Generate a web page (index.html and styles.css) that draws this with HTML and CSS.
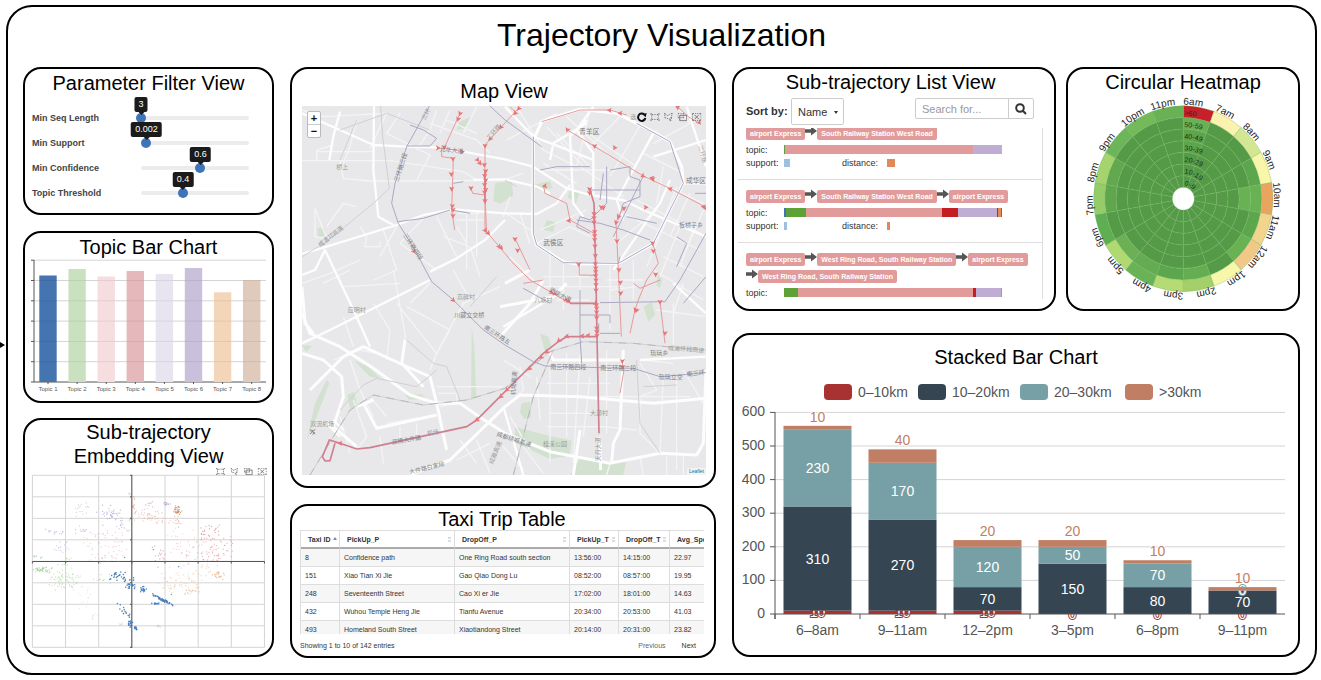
FILE: index.html
```html
<!DOCTYPE html>
<html lang="en">
<head>
<meta charset="utf-8">
<title>Trajectory Visualization</title>
<link rel="stylesheet" href="styles.css">
</head>
<body>
<svg class="defs" aria-hidden="true">
  <symbol id="i-rect" viewBox="-2 -3 94 76"><path d="M0.4,10V-0.2h9.8 M89.6,10V-0.2h-9.8 M0.4,60v10.2h9.8 M89.6,60v10.2h-9.8 M12.3,22.4V10.5h13.1 M33.6,10.5h7.8 M49.1,10.5h7.8 M77.5,22.4V10.5h-13 M12.3,31.1v8.2 M77.7,31.1v8.2 M12.3,47.6v11.9h13.1 M33.6,59.5h7.6 M49.1,59.5h7.7 M77.5,47.6v11.9h-13"/></symbol>
  <symbol id="i-poly" viewBox="5 2 62 58"><path d="M55.2,34.9c1.7,0,3.1,1.4,3.1,3.1s-1.4,3.1-3.1,3.1s-3.1-1.4-3.1-3.1S53.5,34.9,55.2,34.9z M50.4,51c1.7,0,3.1,1.4,3.1,3.1c0,1.7-1.4,3.1-3.1,3.1c-1.7,0-3.1-1.4-3.1-3.1C47.3,52.4,48.7,51,50.4,51z M55.6,37.1l1.5-7.8 M60.1,13.5l1.6-8.7l-7.8,4 M59,19l-1,5.3 M24,16.1l6.4,4.9l6.4-3.3 M48.5,11.6l-5.9,3.1 M19.1,12.8L9.7,5.1l1.1,7.7 M13.4,29.8l1,7.3l6.6,1.6 M11.6,18.4l1,6.1 M27.3,40.2l6.1,1.6 M49.9,52.1l-5.6-7.6l-4.9-1.2"/></symbol>
  <symbol id="i-keep" viewBox="2 -2 84 72"><path d="M4,10.5V1h10.3 M20.7,1h6.1 M33,1h6.1 M55.4,10.5V1H45.2 M4,17.3v6.6 M55.6,17.3v6.6 M4,30.5V40h10.3 M20.7,40h6.1 M33,40h6.1 M55.4,30.5V40H45.2 M21,18.9h62.9v48.6H21V18.9z"/></symbol>
  <symbol id="i-clear" viewBox="2 2 71 56"><path d="M22,14.7l30.9,31 M52.9,14.7L22,45.7 M4.7,16.8V4.2h13.1 M26,4.2h7.8 M41.6,4.2h7.8 M70.3,16.8V4.2H57.2 M4.7,25.9v8.6 M70.3,25.9v8.6 M4.7,43.2v12.6h13.1 M26,55.8h7.8 M41.6,55.8h7.8 M70.3,43.2v12.6H57.2"/></symbol>
  <symbol id="i-arrow" viewBox="0 0 12 10"><path d="M0 3.2h6V0.4L12 5L6 9.6V6.8H0z"/></symbol>
</svg>
<svg class="inflow" viewBox="0 0 5 6" aria-hidden="true"><path d="M0 0L5 3L0 6z"/></svg>
<main class="frame">
  <h1>Trajectory Visualization</h1>
  <div class="columns">

    <div class="column">
      <section class="panel params">
        <h2>Parameter Filter View</h2>
        <div class="param"><label for="p1">Min Seq Length</label><div class="slider" style="--v:0"><input id="p1" type="range" min="0" max="100" value="0"><output for="p1">3</output></div></div>
        <div class="param"><label for="p2">Min Support</label><div class="slider" style="--v:.05"><input id="p2" type="range" min="0" max="100" value="5"><output for="p2">0.002</output></div></div>
        <div class="param"><label for="p3">Min Confidence</label><div class="slider" style="--v:.55"><input id="p3" type="range" min="0" max="100" value="55"><output for="p3">0.6</output></div></div>
        <div class="param"><label for="p4">Topic Threshold</label><div class="slider" style="--v:.39"><input id="p4" type="range" min="0" max="100" value="39"><output for="p4">0.4</output></div></div>
      </section>
      <section class="panel topics">
        <h2>Topic Bar Chart</h2>
        <svg id="topics" viewBox="25 260 247 139" role="img" aria-label="Topic bar chart"></svg>
      </section>
      <section class="panel embedding">
        <h2>Sub-trajectory<br>Embedding View</h2>
        <svg id="embedding" viewBox="25 469 247 187" role="img" aria-label="Embedding scatter plot"></svg>
      </section>
    </div>

    <div class="column">
      <section class="panel map-panel">
        <h2>Map View</h2>
        <div class="map">
          <svg id="map" viewBox="36 108 1212 1107" role="img" aria-label="Trajectory map">
            <g class="park">
              <path d="M508 155l35-15-15 35-28 5zM82 475h22v22l-20 8zM615 340l50-8 5 45-40 25-20-10zM730 345l50-12 8 22-45 5zM840 355l28 15-10 30-25-18zM770 450l25 5-5 30-30-5zM190 870l45 20 35 35-30-5zM110 930l8 10-38 100-30 70 25-110zM172 975l20-10 10 45-22 5zM345 975l50-2 12 14-50 2zM545 770l8 60 6 150-16 10zM750 790l25 10 10 30-20 15zM695 1000l25-5 4 45-20 8-14-20zM675 1070l80 22 90 20-6 45-60 10-105-50zM870 1165l90 10 50-5-10 45h-160zM1060 710l25-15 10 40-20 20zM1105 610l12 20-8 25-10-10zM36 825l30 3-18 18z"/>
            </g>
            <g class="minor">
              <path d="M36 272H300L520 305L560 330M80 245H250M80 270V240L130 225M150 275L160 325L240 333H490L645 328L700 310M200 150L180 230L160 280M290 130L240 235M330 130L290 190L420 255L380 330M440 120L420 180L380 240M36 120L100 140L290 130M470 150L560 190M420 160L560 210L600 250M480 120L450 190M560 110L520 190M75 415L110 505L75 500L75 415M110 470L160 400L200 410M210 470L230 500L225 530H270V515M320 470L270 560M400 445L330 520L440 600M280 480L320 600L250 630M440 440L500 560M460 500L540 530L570 620M500 470L530 520M530 430V600M560 420V560M500 430H570M500 450H580M490 600L540 690M36 640L120 610L210 570M100 640L180 600M160 650L330 640M310 600L345 790L345 810M360 700L420 640M320 700L440 850L520 700L630 650M350 710L480 780L440 850L420 900M160 740L190 830M250 700L300 780L290 870M180 870L210 960L250 1040M130 870L210 840L260 850M190 990L230 1100L200 1140M150 1040L180 1150M240 980L290 1040M330 1070V1120M380 1060V1110M290 1060L410 1040M270 1100L280 1180M440 950H640M445 970H500V1000L450 1010M510 1110L560 1180M560 1110L600 1210M500 1170L600 1120"/>
              <path d="M680 110L760 240L860 290M650 210L800 130M770 170L880 290M800 190L900 290M830 140L960 260M900 120L860 290M1000 130L900 230M1060 150L960 320M1100 180L1010 330M870 290L1000 380M880 180L1040 290M760 280L860 340M760 300L980 300M1060 250L1180 310M1090 220L1200 160L1170 120M1120 290L1100 400M1160 350L1120 450M1200 370L1140 500M1240 420L1180 560M1070 320L1240 400M1000 430L1230 540M1040 390L1250 500M980 520L1100 420M1130 450L1070 590M1170 470L1110 620M1210 480L1170 590M1090 600L1240 690M1120 560L1240 620M740 520L840 470L900 500M750 480L890 420M780 540V650M820 580V720M870 580V700M760 620H900M760 650H1000M800 690H900M660 560L740 640M960 580V780M1030 570V690M950 630H1060M960 660L1040 650M1150 700V830M1100 720L1250 740M1180 640L1150 730M650 430L720 480M660 380L640 440M690 430L720 520"/>
              <path d="M780 860V1180M830 850V1100M870 850L850 1180M900 920L880 1100M950 840V1090M1000 850L990 1000M770 940H960M780 980H1200M780 1030H900M770 1070H940L1040 1080M1050 880L1100 960L1050 980V1090L1110 1150M1120 910L1110 1150M1160 930V1200M1060 870L1150 880M1180 900L1240 1000M690 890L700 960L660 1000M640 870L720 920M660 1040L720 1140M640 1130L700 1200M700 1130L760 1210M960 1180L950 1215M1050 1160L1060 1215M1130 1160V1215M1180 1150V1215M740 920L750 1050"/>
            </g>
            <g class="major">
              <path d="M36 130L150 180L250 225L350 230L440 232L520 245L645 268L730 290L830 355L900 375L1000 390L1060 420L1248 500M36 552L110 530L320 465L400 435L490 418L645 430L740 432L800 400L840 345M252 108L250 300L265 440L310 465M150 125L130 200L118 270M36 615L75 600L105 540L200 740L240 830M420 605L500 565L585 510L645 450M550 330L645 328L740 350L780 370M36 820L120 780L420 630M645 110L730 200L860 250L910 270M890 150L840 200L850 400L880 440M780 270L790 220L890 160M910 110L860 180L910 250V380M1090 190L980 390L1000 450M1090 260L1248 210M1140 330L1110 400L1080 440L970 600M1180 340L1248 340M1190 110L1248 290"/>
              <path class="thick" d="M36 730L60 790L150 830L250 895L360 975L440 1000L510 1000L560 1035L645 1090L730 1125L780 1145L960 1180L1110 1150L1220 1155L1240 1120L1248 900M36 650L45 760L70 790M36 850L100 870L155 920L160 980L130 1070L200 1130M60 960L160 860L220 830L340 885L420 920L440 1000L470 1140M345 810L335 880L400 950M250 990L200 1010M220 1000L260 1075L440 1035M360 1215L480 1170L645 1010L690 975L870 980L1090 1000L1248 985M1000 840L990 1080L970 1120L965 1180M780 850L790 870L1000 870M870 1080L850 1215M645 640L720 600M630 710L790 680L830 640M630 800L720 700L760 630M930 1100L932 1200"/>
              <path d="M130 1050L160 1080M110 1060L150 1100M790 680L690 740L640 770M1150 640L1248 730M1050 870L1248 860M640 1010L700 1215"/>
            </g>
            <g class="rail">
              <path d="M272 108L278 200L298 355L250 400L110 515L36 560M60 1215L130 1100L180 1020L250 975L400 1005L530 990L645 955L780 845L880 815L1030 820L1130 830L1248 840M670 1215L730 980L790 840M150 1020L220 945L260 925L380 950L440 900M350 810L430 880L470 890L510 990M540 710L620 620M730 210L728 490M645 330L680 350M1040 870L1050 1060L1110 1150M1060 950L1160 945M150 180L290 130L420 180M200 150L150 270"/>
              <path class="dash" d="M60 1215L130 1100L180 1020L250 975L400 1005L530 990L645 955L780 845L880 815L1030 820L1130 830L1248 840M670 1215L730 980L790 840"/>
            </g>
            <g class="ring"><path d="M755 155L730 210L728 490L740 525L820 575L860 582L985 580L1090 520L1180 340L1175 290L1140 215L1080 180L980 130L870 118L780 145z"/></g>
            <g class="route">
              <path d="M418 108L350 230L315 340L305 400L325 460L375 540L425 635L490 690L580 780L645 825L730 875L765 888L930 893L1030 895L1110 920L1248 908M325 455L400 445L480 420M350 228H420L440 205L400 180L360 165M600 108L645 150L755 230M730 200V490L740 525L820 578L985 580L1090 520L1180 340L1140 215L1040 160M930 698L1125 695L1170 630L1248 490M485 420L540 430M490 340L520 335M36 1158"/>
              <path d="M895 360H1050M950 290V400L900 450L870 440L860 470L900 490M940 310L930 390M960 300L1020 290V320L1050 330V380L1000 400L985 450M1060 318L970 500M1010 440L1100 460M860 450L930 460L1000 480L1080 510M750 300L800 290H900M700 655L780 700M870 660V800L875 880M930 790H990M870 735H960V760M926 760V790M985 580L990 560M1160 500L1190 520L1160 590M1215 370H1248M1248 620L1180 700"/>
            </g>
            <g class="trip">
              <path d="M585 225V480L628 530L665 575L720 630L780 665L840 700H920M630 175L585 225M690 110L630 175M510 130L462 235L520 245M455 235V260L490 265L485 420L494 480M543 355L548 370L585 375M755 155L870 120H960L1010 135M832 180L915 230L1060 318L1140 355L1248 412M1160 108L1195 140L1228 160M1002 410L978 455L985 600L994 800M760 345L765 370L830 400L840 450L912 490M675 505L720 600M1088 520L1105 580L1070 630L1045 690L1035 720L1020 790M1110 695L1125 820M995 870L1002 900L990 970M868 585V615L915 616M585 375L590 490M660 110L680 130M760 630L700 640M1030 640L1050 655L1110 630"/>
              <path class="thick" d="M900 360L912 400L914 480L918 630L921 800M921 800H830L805 815L760 850L630 980L560 1050L530 1070L240 1133L200 1137L150 1120L118 1110L97 1160L105 1173L120 1172L135 1120M840 700H921M585 300V390M921 800L927 1090"/>
            </g>
            <g id="darts" class="dart"></g>
            <g class="place">
              <text x="898" y="192" class="lg">青羊区</text><text x="1218" y="340" class="lg">成华区</text><text x="790" y="524" class="lg">武侯区</text>
              <text x="157" y="296">桥上</text><text x="200" y="726">应明村</text><text x="528" y="686">高碑村</text><text x="538" y="742" class="dk">川藏立交桥</text>
              <text x="97" y="1068">双流机场</text><text x="760" y="697">八塘村</text><text x="1203" y="471" class="dk">板桥子乡</text><text x="1108" y="856" class="dk">琉璃乡</text>
              <text x="795" y="1128">桂溪公园</text><text x="835" y="896" class="dk">南三环路四段</text><text x="985" y="901" class="dk">南三环路二段</text><text x="1142" y="928" class="dk">琉璃立交</text>
              <text transform="translate(1218 916) rotate(-8)" class="dk">南三环</text><text transform="translate(1188 844) rotate(4)">成渝环线高速</text>
              <text transform="translate(412 1200) rotate(-14)" class="dk">大件路白家段</text><text transform="translate(670 1114) rotate(18)" class="dk">成都绕城高速</text>
              <text transform="translate(350 1116) rotate(-10)" class="dk">双楠大件路</text><text transform="translate(430 1094) rotate(-8)">机场</text>
              <text transform="translate(338 294) rotate(-72)" class="dk">三环路三段</text><text transform="translate(413 136) rotate(-60)">三环</text>
              <text transform="translate(484 247) rotate(6)" class="dk">光华大道</text><text transform="translate(126 504) rotate(-38)">成温邛高速</text>
              <text transform="translate(364 534) rotate(56)" class="dk">三环路四段</text><text transform="translate(618 800) rotate(33)" class="dk">南三环路五</text>
              <text transform="translate(808 680) rotate(28)" class="dk">武侯大道</text><text transform="translate(616 190) rotate(-48)">二环路</text>
              <text transform="translate(622 1150) rotate(-68)">成雅高速</text><text transform="translate(678 940) rotate(-86)" class="dk">机场高速</text>
              <text transform="translate(1232 254) rotate(75)">二环路</text><text transform="translate(930 1138) rotate(-90)">天府大道</text>
              <text x="927" y="1036">大源村</text><text x="1030" y="147">选</text>
            </g>
            <path class="plane" d="M60 1078L76 1092M76 1078L60 1092M62 1084L70 1080M68 1094L74 1086"/>
            <g class="tools">
              <path class="refresh" d="M1063 134A11 11 0 1 0 1066 144"/><path class="tip" d="M1057 133L1070 129L1067 142z"/>
              <use href="#i-rect" x="1081" y="128" width="28" height="26"/><use href="#i-poly" x="1121" y="128" width="28" height="26"/><use href="#i-keep" x="1163" y="128" width="28" height="26"/><use href="#i-clear" x="1206" y="128" width="28" height="26"/>
            </g>
          </svg>
          <div class="zoom"><button type="button" aria-label="Zoom in">+</button><button type="button" aria-label="Zoom out">−</button></div>
          <a class="credit" href="#">Leaflet</a>
        </div>
      </section>
      <section class="panel trips">
        <h2>Taxi Trip Table</h2>
        <div class="table-clip">
          <table>
            <colgroup><col class="c-id"><col><col><col class="c-time"><col class="c-drop"><col class="c-speed"></colgroup>
            <thead><tr><th class="asc">Taxi ID</th><th>PickUp_P</th><th>DropOff_P</th><th>PickUp_T</th><th>DropOff_T</th><th>Avg_Speed</th></tr></thead>
            <tbody>
              <tr><td>8</td><td>Confidence path</td><td>One Ring Road south section</td><td>13:56:00</td><td>14:15:00</td><td>22.97</td></tr>
              <tr><td>151</td><td>Xiao Tian Xi Jie</td><td>Gao Qiao Dong Lu</td><td>08:52:00</td><td>08:57:00</td><td>19.95</td></tr>
              <tr><td>248</td><td>Seventeenth Street</td><td>Cao Xi er Jie</td><td>17:02:00</td><td>18:01:00</td><td>14.63</td></tr>
              <tr><td>432</td><td>Wuhou Temple Heng Jie</td><td>Tianfu Avenue</td><td>20:34:00</td><td>20:53:00</td><td>41.03</td></tr>
              <tr><td>493</td><td>Homeland South Street</td><td>Xiaotiandong Street</td><td>20:14:00</td><td>20:31:00</td><td>23.82</td></tr>
            </tbody>
          </table>
        </div>
        <div class="pager"><span>Showing 1 to 10 of 142 entries</span><button type="button" class="prev">Previous</button><button type="button">Next</button></div>
      </section>
    </div>

    <div class="column wide">
      <div class="pair">
        <section class="panel list">
          <h2>Sub-trajectory List View</h2>
          <div class="toolbar">
            <label for="sort">Sort by:</label>
            <span class="select"><select id="sort"><option>Name</option></select></span>
            <div class="search">
              <input type="text" placeholder="Search for..." aria-label="Search">
              <button type="button" aria-label="Search"><svg viewBox="0 0 12 12"><circle cx="5" cy="5" r="3.8"/><path d="M7.8 7.8L11 11"/></svg></button>
            </div>
          </div>
          <ul class="items">
            <li>
              <div class="tags"><b>airport Express</b><svg><use href="#i-arrow"/></svg><b>South Railway Station West Road</b></div>
              <div class="row"><span>topic:</span><div class="bar"><i class="green" style="flex:2"></i><i class="pink" style="flex:565"></i><i class="purple" style="flex:86"></i></div></div>
              <div class="row"><span>support:</span><i class="chip sky" style="width:6px"></i><span>distance:</span><i class="chip orange" style="width:8px"></i></div>
            </li>
            <li>
              <div class="tags"><b>airport Express</b><svg><use href="#i-arrow"/></svg><b>South Railway Station West Road</b><svg><use href="#i-arrow"/></svg><b>airport Express</b></div>
              <div class="row"><span>topic:</span><div class="bar"><i class="blue" style="flex:5"></i><i class="green" style="flex:62"></i><i class="pink" style="flex:407"></i><i class="red" style="flex:49"></i><i class="purple" style="flex:117"></i><i class="navy" style="flex:3"></i><i class="orange" style="flex:7"></i><i class="brown" style="flex:4"></i></div></div>
              <div class="row"><span>support:</span><i class="chip sky" style="width:3px"></i><span>distance:</span><i class="chip orange" style="width:3px"></i></div>
            </li>
            <li>
              <div class="tags"><b>airport Express</b><svg><use href="#i-arrow"/></svg><b>West Ring Road, South Railway Station</b><svg><use href="#i-arrow"/></svg><b>airport Express</b><svg><use href="#i-arrow"/></svg><b>West Ring Road, South Railway Station</b></div>
              <div class="row"><span>topic:</span><div class="bar"><i class="green" style="flex:43"></i><i class="pink" style="flex:525"></i><i class="red" style="flex:9"></i><i class="purple" style="flex:74"></i><i class="orange" style="flex:3"></i></div></div>
            </li>
          </ul>
        </section>
        <section class="panel heat">
          <h2>Circular Heatmap</h2>
          <svg id="heat" viewBox="1068 95 230 215" role="img" aria-label="Circular heatmap"></svg>
        </section>
      </div>
      <section class="panel stacked">
        <h2>Stacked Bar Chart</h2>
        <svg id="stacked" viewBox="734 370 564 286" role="img" aria-label="Stacked bar chart"></svg>
      </section>
    </div>
  </div>
</main>
<script src="charts.js"></script>
</body>
</html>
```

FILE: styles.css
```css
* { box-sizing: border-box; }
body {
  margin: 0;
  padding: 5px 4px 5px 6px;
  position: relative;
  background: #fff;
  color: #000;
  font-family: "Liberation Sans", "Noto Sans CJK SC", sans-serif;
}
svg { display: block; }
button, input, select { font-family: inherit; }
.defs { position: absolute; width: 0; height: 0; }
.inflow { position: absolute; left: 0; top: 342px; width: 5px; height: 6px; }
.frame { border: 2px solid #000; border-radius: 26px; padding: 0 15px 15px; }
h1 { margin: 0; padding-bottom: 4px; font-size: 32px; line-height: 56px; font-weight: 400; text-align: center; }
h2 { margin: 0; font-size: 20px; line-height: 24px; font-weight: 400; text-align: center; }
.columns { display: grid; grid-template-columns: minmax(0, 251fr) minmax(0, 426fr) minmax(0, 568fr); gap: 16px; align-items: start; }
.column { display: flex; flex-direction: column; gap: 16px; }
.wide { gap: 22px; }
.pair { display: grid; grid-template-columns: minmax(0, 324fr) minmax(0, 234fr); gap: 10px; }
.panel { border: 2px solid #000; border-radius: 18px; overflow: hidden; }
.panel > svg { width: 100%; }

/* sliders */
.params { padding: 2px 0 8px; }
.params h2 { margin-bottom: 10px; }
.param { display: flex; align-items: center; height: 25px; padding: 0 23px 0 7px; }
.param label { width: 109px; font-size: 9px; font-weight: 700; color: #444; }
.slider { flex: 1; position: relative; height: 10px; }
.slider::before { content: ""; position: absolute; inset: 3px 0; border-radius: 2px; background: #ececec; }
.slider input { position: absolute; left: -5px; top: 0; width: calc(100% + 10px); height: 10px; margin: 0; appearance: none; background: none; }
.slider input::-webkit-slider-thumb { appearance: none; width: 10px; height: 10px; border-radius: 50%; background: #3f74b8; }
.slider output {
  position: absolute; bottom: 11px; left: calc(var(--v) * 100%); transform: translateX(-50%);
  padding: 0 4px; border-radius: 2px; background: #1b1b1b; color: #fff; font-size: 9px; line-height: 15px;
}
.slider output::after { content: ""; position: absolute; left: 50%; top: 100%; margin-left: -3px; border: 3px solid transparent; border-top-color: #1b1b1b; }

/* svg charts */
.topics { padding-top: 2px; padding-bottom: 3px; }
.embedding { margin-top: -1px; }
.grid { stroke: #d4d4d4; stroke-width: 1; fill: none; }
.axis { stroke: #555; stroke-width: 1; fill: none; }
.tick-sm { font-size: 6px; fill: #555; text-anchor: middle; }
.tools { fill: none; stroke: #777; stroke-width: 1; }
.tools path, symbol path { vector-effect: non-scaling-stroke; }

/* map */
.map-panel { padding: 10px 8px 11px 10px; }
.map-panel h2 { margin-bottom: 3px; }
.map { position: relative; }
.map > svg { width: 100%; background: #e8e8ea; }
.park { fill: #d3e2d0; }
.minor { fill: none; stroke: #f4f4f5; stroke-width: 4; }
.major { fill: none; stroke: #fdfdfd; stroke-width: 7; stroke-linejoin: round; }
.major .thick { stroke-width: 9; }
.rail { fill: none; stroke: #d0d0d2; stroke-width: 3; }
.rail .dash { stroke: #b9b9bc; stroke-dasharray: 24 20; }
.ring { fill: none; stroke: #fff; stroke-width: 9; }
.route { fill: none; stroke: #aaa7c4; stroke-width: 3; }
.trip { fill: none; stroke: #e69a9b; stroke-width: 3; }
.trip .thick { stroke: #cf7f90; stroke-width: 5; }
.dart { fill: #ea7577; }
.place { fill: #999; font-size: 18px; text-anchor: middle; }
.place .dk { fill: #808085; }
.place .lg { fill: #777; font-size: 20px; }
.plane { stroke: #888; stroke-width: 3; fill: none; }
.tools .refresh { stroke: #111; stroke-width: 2; }
.tools .tip { fill: #111; stroke: none; }
.zoom { position: absolute; left: 5px; top: 5px; border: 1px solid #bbb; border-radius: 2px; background: #fff; }
.zoom button { display: block; width: 12px; height: 12px; padding: 0; border: 0; background: none; font-size: 11px; line-height: 12px; font-weight: 700; color: #111; }
.zoom button + button { border-top: 1px solid #ccc; height: 13px; }
.credit { position: absolute; right: 0; bottom: 0; padding: 0 2px; background: #f3f3f4; color: #0078a8; font-size: 5px; line-height: 7px; text-decoration: none; }

/* table */
.trips { padding: 1px 10px 2px 8px; color: #333; font-size: 7px; }
.trips h2 { color: #000; margin-bottom: -1px; }
.table-clip { overflow: hidden; height: 104px; }
table { width: calc(100% + 26px); table-layout: fixed; border-collapse: separate; border-spacing: 0; border-top: 1px solid #ddd; border-left: 1px solid #ddd; }
.c-id { width: 39px; }
.c-time { width: 49px; }
.c-drop { width: 51px; }
.c-speed { width: 60px; }
th { position: relative; height: 18px; padding: 0 0 0 7px; text-align: left; border-right: 1px solid #ddd; border-bottom: 2px solid #aaa; white-space: nowrap; }
th::after { content: ""; position: absolute; right: 3px; top: 6px; width: 3px; height: 5px; background: linear-gradient(#ddd 0 2px, transparent 2px 3px, #ddd 3px); }
th.asc::after { height: 0; width: 0; top: 6px; right: 2px; background: none; border: 2px solid transparent; border-top: 0; border-bottom: 3px solid #8080c8; }
td { height: 18px; padding: 0 0 0 4px; border-right: 1px solid #ddd; border-bottom: 1px solid #ddd; white-space: nowrap; }
tbody tr:nth-child(odd) { background: #f6f6f6; }
.pager { display: flex; align-items: center; height: 18px; margin-top: 2px; padding-right: 8px; }
.pager span { flex: 1; }
.pager button { padding: 0; margin-left: 16px; border: 0; background: none; font-size: 7px; color: #333; }
.pager .prev { color: #666; }

/* list */
.list { padding: 1px 11px 10px 4px; }
.toolbar { display: flex; align-items: flex-start; height: 30px; padding: 0 9px 0 8px; margin-top: 4px; }
.toolbar label { width: 45px; font-size: 11px; line-height: 26px; font-weight: 700; color: #333; }
.select { position: relative; }
.select::after { content: ""; position: absolute; right: 6px; top: 13px; border: 2px solid transparent; border-top: 3px solid #333; border-bottom: 0; }
.select select { appearance: none; width: 53px; height: 27px; padding: 0 6px; border: 1px solid #ccc; border-radius: 2px; background: #fff; color: #333; font-size: 11px; }
.search { display: flex; margin-left: auto; height: 21px; }
.search input { width: 94px; padding: 0 6px; border: 1px solid #ccc; border-radius: 2px 0 0 2px; font-size: 11px; }
.search input::placeholder { color: #999; }
.search button { width: 26px; margin-left: -1px; padding: 0 6px; border: 1px solid #ccc; border-radius: 0 2px 2px 0; background: #fff; }
.search svg { width: 12px; height: 12px; fill: none; stroke: #333; stroke-width: 2; }
.items { list-style: none; margin: 0; padding: 0; height: 171px; overflow: hidden; border-right: 1px solid #ddd; color: #333; }
.items li { padding: 10px 8px; border-bottom: 1px solid #ddd; }
.items li:first-child { padding-top: 0; margin-top: -1px; }
.items li:last-child { border-bottom: 0; }
.tags { display: flex; flex-wrap: wrap; margin-bottom: -1px; }
.tags b { height: 13px; margin-bottom: 4px; padding: 0 4px; border-radius: 2px; background: #e29b9b; color: #fff; font-size: 7px; line-height: 13px; }
.tags svg { width: 12px; height: 10px; margin-top: -1px; fill: #555; }
.row { display: grid; grid-template-columns: 38px 58px 45px 1fr; align-items: center; height: 13px; font-size: 9px; }
.bar { grid-column: 2 / -1; display: flex; width: 218px; height: 9px; }
.chip { height: 8px; }
.green { background: #5ea136; } .pink { background: #e29b9b; } .purple { background: #bfadd4; }
.red { background: #c31e22; } .blue { background: #3f74b8; } .navy { background: #5b4a8a; }
.orange { background: #e2895a; } .brown { background: #8a6a35; } .sky { background: #9fbfdf; }

/* heatmap */
.heat { padding-top: 1px; }
.cell { stroke: #73b564; stroke-opacity: .35; stroke-width: 1; }
.hour { font-size: 10px; fill: #222; }
.band { font-size: 7px; fill: #143414; }

/* stacked bars */
.stacked { padding-top: 10px; }
.stacked text { font-size: 14px; fill: #555; }
.stacked .value { text-anchor: middle; fill: #fff; paint-order: stroke; stroke-width: 2; stroke-linejoin: round; }
.stacked .value.outer { fill: #c07f64; stroke: #fff; }
.stacked .mid { text-anchor: middle; }
.stacked .end { text-anchor: end; }
```

FILE: charts.js
```js
const NS = "http://www.w3.org/2000/svg";
function add(parent, tag, attrs, text) {
  const el = document.createElementNS(NS, tag);
  for (const k in attrs) el.setAttribute(k, attrs[k]);
  if (text !== undefined) el.textContent = text;
  parent.appendChild(el);
  return el;
}
let seed = 7;
function rnd() { seed = (seed * 16807) % 2147483647; return seed / 2147483647; }
function spread() { return (rnd() + rnd() - 1) * 1.15; }

// Topic bars
(function () {
  const svg = document.getElementById("topics");
  for (let i = 0; i <= 6; i++) {
    const y = 383 - i * 20.3;
    add(svg, "path", { class: i ? "grid" : "axis", d: `M34 ${y}H266` });
    add(svg, "path", { class: "axis", d: `M31 ${y}H34` });
  }
  add(svg, "path", { class: "axis", d: "M34 261V383" });
  const bars = [[276.5, "#4575b0"], [270, "#cae1c1"], [277.5, "#f5dde0"], [272, "#e5b8bb"], [275, "#e9e5f0"], [269, "#cbc0dc"], [293.3, "#f3d6b9"], [281, "#dfcabb"]];
  bars.forEach(([y, fill], i) => {
    const x = 39.3 + i * 29.1;
    add(svg, "rect", { x, y, width: 17.4, height: 383 - y, fill });
    for (let g = 1; g < 6; g++) if (383 - g * 20.3 > y) add(svg, "path", { d: `M${x} ${383 - g * 20.3}h17.4`, stroke: "#000", "stroke-opacity": .07 });
    add(svg, "path", { class: "axis", d: `M${x + 8.7} 383v2` });
    add(svg, "text", { class: "tick-sm", x: x + 8.7, y: 392 }, "Topic " + (i + 1));
  });
})();

// Embedding scatter
(function () {
  const svg = document.getElementById("embedding");
  for (let i = 0; i < 8; i++) add(svg, "path", { class: "grid", d: `M${32.4 + i * 33.15} 476.3V648.5` });
  for (let i = 0; i < 9; i++) add(svg, "path", { class: "grid", d: `M32.4 ${476.3 + i * 21.5}H264.5` });
  add(svg, "path", { class: "axis", d: "M131.8 476V649M32.4 562.5H264.5" });
  for (let i = 0; i < 8; i++) add(svg, "path", { class: "axis", d: `M${32.4 + i * 33.15} 562.5v2` });
  for (let i = 0; i < 9; i++) add(svg, "path", { class: "axis", d: `M130 ${476.3 + i * 21.5}h2` });
  const plot = add(svg, "g", { transform: "translate(0 415) scale(.3333)" });
  // cx, cy, spread x, spread y, slope, count, colour, opacity
  [
    [238, 290, 30, 30, 0, 16, "#9a8fc4", .4], [330, 300, 38, 30, 0, 36, "#9a8fc4", .6], [372, 340, 25, 25, 0, 16, "#9a8fc4", .5],
    [165, 352, 28, 8, 0, 12, "#9a8fc4", .5], [180, 400, 28, 20, 0, 16, "#9a8fc4", .4], [120, 428, 18, 6, 0, 5, "#79a878", .6], [250, 350, 25, 14, 0, 12, "#b58fc4", .5],
    [396, 262, 10, 26, 0, 16, "#b5745a", .6], [320, 395, 75, 50, 0, 66, "#e39aa5", .45], [450, 308, 50, 22, 0, 46, "#e0a090", .55], [450, 268, 14, 12, 0, 7, "#c07060", .5],
    [533, 287, 13, 13, 0, 32, "#c48a66", .8], [500, 270, 16, 8, 0, 12, "#a890c0", .6], [520, 325, 25, 18, 0, 14, "#dca080", .6],
    [560, 400, 65, 55, 0, 50, "#eab0b4", .5], [632, 355, 40, 22, 0, 26, "#d07080", .6], [640, 405, 60, 40, 0, 56, "#d88890", .6], [480, 425, 24, 36, 0, 16, "#c06070", .5],
    [655, 480, 25, 12, .3, 18, "#dba070", .75], [625, 462, 40, 24, 0, 12, "#e5b090", .5], [545, 505, 70, 34, 0, 55, "#ecc2a2", .6], [570, 530, 55, 22, 0, 20, "#e2a070", .55],
    [125, 466, 30, 12, 0, 34, "#8cc47e", .7], [190, 500, 58, 30, 0, 66, "#9ccc90", .55], [195, 445, 20, 20, 0, 10, "#9ccc90", .6], [310, 494, 30, 12, 0, 10, "#9ccc90", .5],
    [255, 550, 36, 40, 0, 14, "#d8b8b0", .4], [280, 610, 14, 24, 0, 6, "#c0b0d8", .4], [365, 630, 8, 6, 0, 6, "#ccc", .6], [477, 637, 8, 6, 0, 8, "#ccc", .6]
  ].forEach(([cx, cy, sx, sy, k, n, fill, o]) => {
    for (let i = 0; i < n; i++) { const dx = spread() * sx; add(plot, "circle", { cx: cx + dx, cy: cy + dx * k + spread() * sy, r: 2, fill, "fill-opacity": o }); }
  });
  [[365, 490, 34, 18, 0, 26], [392, 515, 18, 10, 0, 22], [431, 526, 9, 9, 0, 18], [488, 558, 32, 4, .5, 60], [466, 569, 14, 2, 0, 12], [368, 588, 20, 14, .9, 14], [390, 625, 8, 14, .4, 16], [408, 643, 5, 4, .6, 12], [343, 482, 6, 8, 0, 5]]
    .forEach(([cx, cy, sx, sy, k, n]) => {
      for (let i = 0; i < n; i++) { const dx = spread() * sx; add(plot, "circle", { cx: cx + dx, cy: cy + dx * k + spread() * sy, r: 2.3, fill: "#4a80bd" }); }
    });
  [[374, 430], [536, 458], [460, 407], [514, 541]].forEach(([cx, cy]) => add(plot, "circle", { cx, cy, r: 2, fill: "#5a7fae" }));
  const tools = add(svg, "g", { class: "tools" });
  ["rect", "poly", "keep", "clear"].forEach((n, i) => add(tools, "use", { href: "#i-" + n, x: 216 + i * 13.9, y: 469, width: 9, height: 7 }));
})();

// Direction markers along the trips
(function () {
  const g = document.getElementById("darts");
  const pts = [[510, 131, 20], [504, 148, 20], [445, 234, -90], [463, 232, 0], [517, 245, -90], [489, 267, 0], [484, 313, 0], [485, 357, 0], [487, 409, 0], [489, 420, 0], [489, 438, 0], [543, 355, 0],
    [585, 228, 0], [600, 207, 40], [632, 172, 40], [563, 270, -40], [570, 280, -40], [583, 285, 0], [587, 304, 0], [584, 318, 0], [587, 332, 0], [584, 345, 0], [587, 360, 0], [584, 368, 0], [585, 394, 0], [586, 482, -30], [595, 490, -40], [628, 530, -40], [634, 534, -40], [372, 545, -30],
    [675, 130, 40], [686, 116, 40], [832, 180, 20], [958, 121, 90], [990, 130, 90], [914, 229, 0], [975, 233, -90], [1163, 113, 0], [1228, 158, -40], [1058, 318, 60], [1085, 324, 100], [1088, 328, 100], [1140, 357, 100], [1240, 410, 100], [1246, 414, 100],
    [764, 348, 80], [899, 358, 0], [899, 370, 0], [934, 412, 0], [940, 414, 0], [1002, 416, 0], [1068, 412, -90], [978, 458, 20], [985, 440, 30], [836, 452, 90], [675, 508, 0], [683, 542, 0], [981, 514, 0], [1088, 520, 0], [1090, 544, 0], [987, 600, 0], [1097, 614, 0], [866, 584, 0],
    [912, 432, 0], [912, 445, 0], [912, 458, 0], [914, 486, 0], [914, 498, 0], [914, 510, 0], [915, 530, 0], [916, 558, 0], [916, 582, 0], [917, 596, 0], [917, 606, 0], [917, 618, 0], [918, 632, 0], [918, 645, 0], [918, 662, 0], [919, 706, 0], [920, 716, 0], [920, 728, 0], [920, 744, 0], [920, 776, 0], [920, 786, 0], [921, 798, 0],
    [991, 638, 0], [992, 670, 0], [785, 668, -60], [795, 672, -60], [828, 690, -60], [836, 694, -60], [918, 700, -60], [1110, 696, 0], [1125, 790, 0], [1036, 720, 20], [1039, 722, 20], [997, 874, 0], [998, 892, 0], [876, 798, 90], [894, 796, 90], [830, 799, 80], [806, 812, 50], [770, 846, 50], [753, 862, 50], [718, 896, 50], [650, 960, 50], [632, 980, 50], [560, 1050, 60], [150, 1120, 90], [490, 691, -45]];
  pts.forEach(([x, y, r]) => add(g, "path", { d: "M-8-7L0-4L8-7L0 8z", transform: `translate(${x} ${y}) rotate(${r})` }));
})();

// Circular heatmap: 18 hours by 7 distance bands
(function () {
  const svg = document.getElementById("heat");
  const cx = 1183.3, cy = 199.7, k = .965, r0 = 11.4, step = 11.65;
  const P = (r, a) => `${(cx + r * k * Math.sin(a)).toFixed(2)} ${(cy - r * Math.cos(a)).toFixed(2)}`;
  const hours = ["6am", "7am", "8am", "9am", "10am", "11am", "12am", "1pm", "2pm", "3pm", "4pm", "5pm", "6pm", "7pm", "8pm", "9pm", "10pm", "11pm"];
  const outer = ["#c8202a", "#fbf2b0", "#d3e793", "#f8f6a9", "#e9a55f", "#f3d48c", "#f2c887", "#f8f6a9", "#a3d06a", "#b5db74", "#69b356", "#b0da71", "#60ae52", "#95cb68", "#a5d36d", "#6db55a", "#74b95a", "#69b155"];
  const base = "#559b47";
  const special = { "0,5": "#6bb054", "0,4": "#5ea44c", "0,3": "#5ea44c", "4,5": "#69b253", "4,4": "#69b253", "3,5": "#5ca74d", "5,5": "#5ca74d", "6,5": "#69b253", "8,5": "#64ae51", "9,5": "#5ca74d", "10,5": "#64ab52", "11,5": "#6bb054", "13,5": "#5fa64d", "14,5": "#61a84e" };
  for (let h = 0; h < 18; h++) {
    const a = h * Math.PI / 9, b = (h + 1) * Math.PI / 9;
    for (let r = 0; r < 7; r++) {
      const i = r0 + r * step, o = i + step;
      add(svg, "path", { class: "cell", fill: r === 6 ? outer[h] : special[h + "," + r] || base,
        d: `M${P(i, a)}L${P(o, a)}A${o * k} ${o} 0 0 1 ${P(o, b)}L${P(i, b)}A${i * k} ${i} 0 0 0 ${P(i, a)}z` });
    }
  }
  const ring = (id, r) => add(svg, "path", { id, fill: "none", d: `M${P(r, 0)}A${r * k} ${r} 0 0 1 ${P(r, Math.PI)}A${r * k} ${r} 0 0 1 ${P(r, 2 * Math.PI)}` });
  ring("rim", 94);
  hours.forEach((h, i) => {
    const t = add(svg, "text", { class: "hour" });
    add(t, "textPath", { href: "#rim", startOffset: (i / 18 * 100).toFixed(2) + "%" }, h);
  });
  ["0-9", "10-19", "20-29", "30-39", "40-49", "50-59", ">60"].forEach((s, i) => {
    ring("band" + i, r0 + i * step + 2);
    add(add(svg, "text", { class: "band" }), "textPath", { href: "#band" + i, startOffset: 1 }, s);
  });
})();

// Stacked bars
(function () {
  const svg = document.getElementById("stacked");
  const x0 = 775, x1 = 1285, y0 = 615, unit = .336, pitch = 85, w = 68;
  const legend = [["0–10km", "#a83232", 824], ["10–20km", "#364552", 918], ["20–30km", "#76a0a6", 1020], [">30km", "#c07f64", 1125]];
  legend.forEach(([t, fill, x]) => {
    add(svg, "rect", { x, y: 385, width: 28, height: 16, rx: 4, fill });
    add(svg, "text", { x: x + 34, y: 398 }, t);
  });
  for (let v = 0; v <= 600; v += 100) {
    const y = y0 - v * unit;
    if (v) add(svg, "path", { class: "grid", d: `M${x0} ${y}H${x1}` });
    add(svg, "path", { class: "axis", d: `M${x0 - 5} ${y}H${x0}` });
    add(svg, "text", { class: "end", x: x0 - 10, y: y + 4 }, v);
  }
  const cats = ["6–8am", "9–11am", "12–2pm", "3–5pm", "6–8pm", "9–11pm"];
  const series = [[10, 10, 10, 0, 0, 0], [310, 270, 70, 150, 80, 70], [230, 170, 120, 50, 70, 0], [10, 40, 20, 20, 10, 10]];
  const base = cats.map(() => 0);
  series.forEach((vals, s) => {
    const fill = legend[s][1];
    const labels = [];
    vals.forEach((v, i) => {
      const x = x0 + i * pitch + 8.5, top = y0 - (base[i] + v) * unit;
      if (v) add(svg, "rect", { x, y: top, width: w, height: v * unit, fill });
      labels.push(s === 3 ? [x + w / 2, top - 4, v] : [x + w / 2, top + v * unit / 2 + 5, v]);
      base[i] += v;
    });
    labels.forEach(([x, y, v]) => add(svg, "text", s === 3 ? { class: "value outer", x, y } : { class: "value", x, y, stroke: fill }, v));
  });
  add(svg, "path", { class: "axis", d: `M${x0} 413V${y0 + 5}M${x0} ${y0}H${x1}` });
  cats.forEach((c, i) => {
    add(svg, "path", { class: "axis", d: `M${x0 + i * pitch} ${y0}v5` });
    add(svg, "text", { class: "mid", x: x0 + (i + .5) * pitch, y: 636 }, c);
  });
})();
```
